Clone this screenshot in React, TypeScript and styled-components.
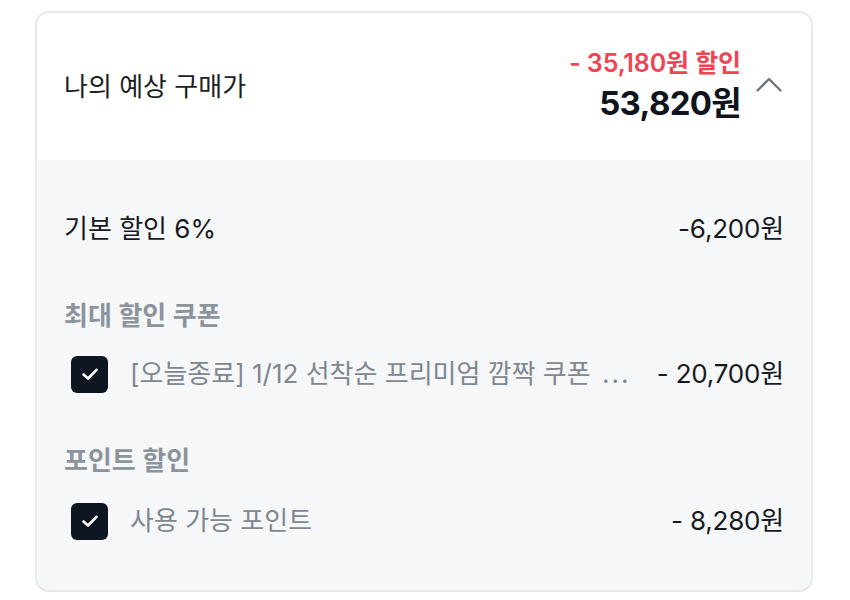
import React from "react";
import styled, { createGlobalStyle } from "styled-components";

const Global = createGlobalStyle`
  html, body { margin: 0; padding: 0; background: #ffffff; }
  body { font-family: Inter, "Noto Sans CJK KR", sans-serif; -webkit-font-smoothing: antialiased; }
  * { box-sizing: border-box; }
`;

const Page = styled.div`
  padding: 11px 37px 0 35px;
  width: 850px;
`;

const Card = styled.section`
  width: 778px;
  height: 581px;
  border: 2px solid #e8e9ec;
  border-radius: 14px;
  overflow: hidden;
  display: flex;
  flex-direction: column;
  background: #f6f7f8;
`;

const Header = styled.header`
  height: 147px;
  flex: none;
  background: #ffffff;
  display: flex;
  align-items: center;
  padding: 0 29px 0 27px;
`;

const Title = styled.h2`
  margin: 0;
  flex: 1;
  font-size: 26px;
  line-height: 36px;
  font-weight: 400;
  color: #1b1f24;
`;

const PriceBox = styled.div`
  display: flex;
  flex-direction: column;
  align-items: flex-end;
  margin-right: 1px;
`;

const Discount = styled.span`
  font-size: 25px;
  line-height: 32px;
  font-weight: 600;
  color: #ef4452;
  letter-spacing: -0.1px;
`;

const Total = styled.span`
  font-size: 33px;
  line-height: 48px;
  font-weight: 700;
  color: #0d141c;
  letter-spacing: -0.7px;
`;

const Toggle = styled.button`
  border: 0;
  background: none;
  padding: 0;
  margin: 0 0 4px 14px;
  width: 26px;
  height: 28px;
  display: flex;
  align-items: center;
  justify-content: center;
  cursor: pointer;
`;

const Body = styled.div`
  flex: 1;
  display: flex;
  flex-direction: column;
  gap: 51px;
  padding: 52px 27px 0 27px;
`;

const Row = styled.div`
  display: flex;
  align-items: center;
  justify-content: space-between;
  min-height: 34px;
`;

const TopRow = styled(Row)`
  margin-bottom: 2px;
`;

const Label = styled.span`
  font-size: 26px;
  line-height: 34px;
  color: #161a1f;
`;

const Amount = styled.span`
  font-size: 26px;
  line-height: 34px;
  color: #161a1f;
  white-space: nowrap;
  flex: none;
  letter-spacing: -0.2px;
`;

const Group = styled.div<{ $gap: number }>`
  display: flex;
  flex-direction: column;
  gap: ${(p) => p.$gap}px;
`;

const GroupTitle = styled.h3`
  margin: 0;
  font-size: 26px;
  line-height: 34px;
  font-weight: 600;
  color: #8b939b;
`;

const CheckRow = styled.label`
  display: flex;
  align-items: center;
  gap: 22px;
  padding-left: 7px;
  min-height: 38px;
`;

const Box = styled.span`
  width: 37px;
  height: 37px;
  flex: none;
  border-radius: 6px;
  background: #0e1721;
  display: flex;
  align-items: center;
  justify-content: center;
`;

const ItemText = styled.span`
  flex: 1;
  min-width: 0;
  font-size: 26px;
  line-height: 34px;
  color: #7f878f;
  white-space: nowrap;
  overflow: hidden;
  text-overflow: ellipsis;
`;

const Dots = styled.span`
  letter-spacing: 2px;
  margin-left: 4px;
`;

const Check = () => (
  <svg width="18" height="14" viewBox="0 0 18 14" fill="none">
    <path d="M2.5 7.5 L7 11.5 L15.5 2.8" stroke="#ffffff" strokeWidth="2.6" strokeLinecap="round" strokeLinejoin="round" />
  </svg>
);

const ChevronUp = () => (
  <svg width="26" height="15" viewBox="0 0 26 15" fill="none">
    <path d="M1.5 13.5 L13 2 L24.5 13.5" stroke="#6d747b" strokeWidth="2.4" strokeLinecap="round" strokeLinejoin="round" />
  </svg>
);

export default function App() {
  return (
    <Page>
      <Global />
      <Card>
        <Header>
          <Title>나의 예상 구매가</Title>
          <PriceBox>
            <Discount>- 35,180원 할인</Discount>
            <Total>53,820원</Total>
          </PriceBox>
          <Toggle aria-label="접기">
            <ChevronUp />
          </Toggle>
        </Header>
        <Body>
          <TopRow>
            <Label>기본 할인 6%</Label>
            <Amount>-6,200원</Amount>
          </TopRow>
          <Group $gap={22}>
            <GroupTitle>최대 할인 쿠폰</GroupTitle>
            <CheckRow>
              <Box>
                <Check />
              </Box>
              <ItemText>
                [오늘종료] 1/12 선착순 프리미엄 깜짝 쿠폰 <Dots>...</Dots>
              </ItemText>
              <Amount>- 20,700원</Amount>
            </CheckRow>
          </Group>
          <Group $gap={24}>
            <GroupTitle>포인트 할인</GroupTitle>
            <CheckRow>
              <Box>
                <Check />
              </Box>
              <ItemText>사용 가능 포인트</ItemText>
              <Amount>- 8,280원</Amount>
            </CheckRow>
          </Group>
        </Body>
      </Card>
    </Page>
  );
}
